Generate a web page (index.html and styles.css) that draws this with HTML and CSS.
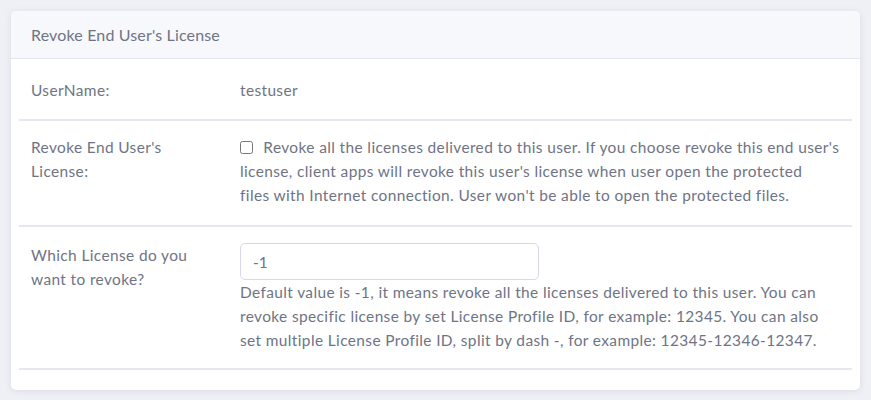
FILE: index.html
```html
<!DOCTYPE html>
<html>
<head>
<meta charset="utf-8">
<link rel="stylesheet" href="styles.css">
</head>
<body>
<div class="card">
  <div class="card-header">Revoke End User's License</div>
  <div class="card-body">
    <div class="row row-user">
      <div class="label">UserName:</div>
      <div class="value">testuser</div>
    </div>
    <div class="row row-check">
      <div class="label">Revoke End User's License:</div>
      <div class="value"><label class="check"><input type="checkbox" class="cb"> Revoke all the licenses delivered to this user. If you choose revoke this end user's<br>license, client apps will revoke this user's license when user open the protected<br>files with Internet connection. User won't be able to open the protected files.</label></div>
    </div>
    <div class="row row-which">
      <div class="label">Which License do you want to revoke?</div>
      <div class="value">
        <input type="text" class="input" value="-1">
        <div class="help">Default value is -1, it means revoke all the licenses delivered to this user. You can<br>revoke specific license by set License Profile ID, for example: 12345. You can also<br>set multiple License Profile ID, split by dash -, for example: 12345-12346-12347.</div>
      </div>
    </div>
  </div>
</div>
</body>
</html>
```
FILE: styles.css
```css
html, body {
  margin: 0;
  padding: 0;
}
body {
  background: #eff0f5;
  padding: 11px;
  font-family: "Lato", "Nunito", sans-serif;
  font-size: 15.45px;
  line-height: 24px;
  letter-spacing: 0.38px;
  color: #6e7485;
}
.card {
  width: 849px;
  background: #ffffff;
  border-radius: 5px;
  box-shadow: 0 1px 6px rgba(80, 80, 120, 0.12);
  overflow: hidden;
}
.card-header {
  background: #f7f8fc;
  border-bottom: 1px solid #e4e5ef;
  height: 48px;
  line-height: 48px;
  padding: 0 20px;
  box-sizing: border-box;
  font-size: 16px;
  letter-spacing: 0.15px;
}
.card-body {
  padding: 0 8px 20px;
}
.row {
  display: grid;
  grid-template-columns: 209px 1fr;
  padding: 16px 12px;
  border-bottom: 2px solid #e7e7f3;
}
.row-user {
  padding: 19px 12px 17px;
}
.row-check {
  padding: 14px 12px 18px;
}
.label {
  padding-right: 30px;
}
.check {
  display: block;
  white-space: nowrap;
}
.help {
  white-space: nowrap;
}
.cb {
  margin: 0 6px 0 0;
  width: 13px;
  height: 13px;
  vertical-align: -1px;
}
.input {
  display: block;
  box-sizing: border-box;
  width: 299px;
  height: 37px;
  border: 1px solid #d9d7ea;
  border-radius: 5px;
  padding: 0 12px;
  font: inherit;
  color: #6e7485;
  margin: 0;
}
```
